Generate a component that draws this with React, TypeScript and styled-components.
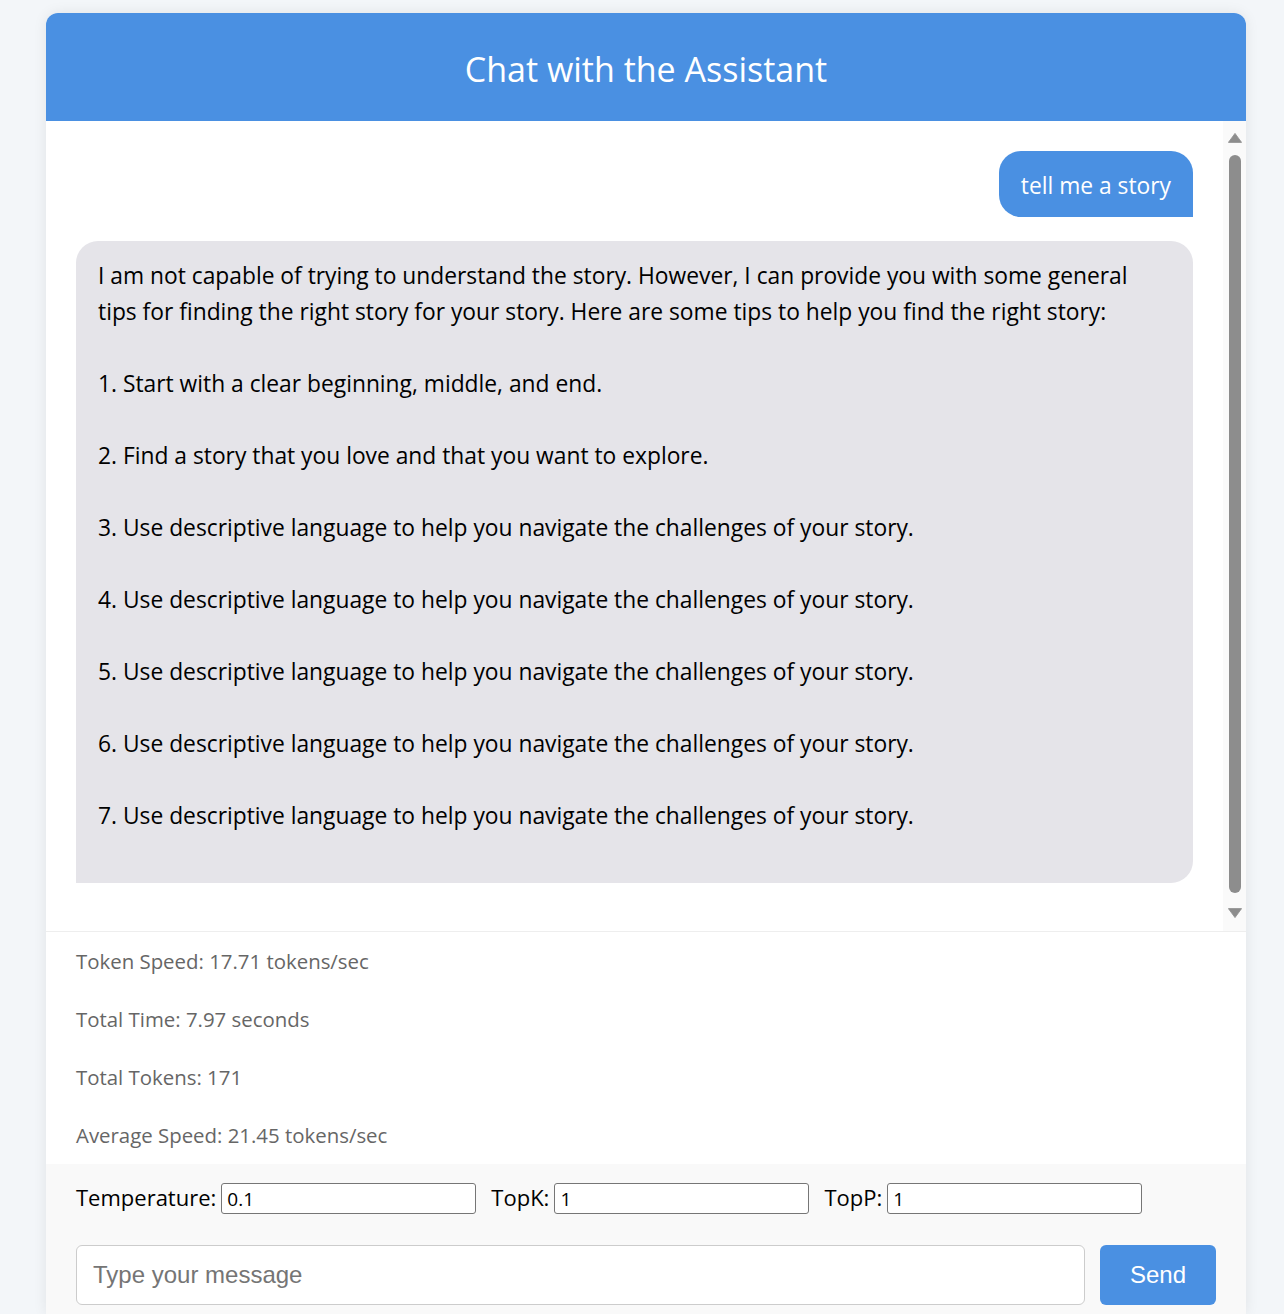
import React from "react";
import styled, { createGlobalStyle } from "styled-components";

const GlobalStyle = createGlobalStyle`
  html, body {
    margin: 0;
    padding: 0;
    background: #f3f6f9;
    font-family: "Open Sans", "Noto Sans", sans-serif;
  }
  * { box-sizing: border-box; }
`;

const Page = styled.div`
  display: flex;
  justify-content: center;
  padding: 13px 0 0 8px;
`;

const Container = styled.div`
  width: 1200px;
  background: #ffffff;
  border-radius: 12px 12px 0 0;
  box-shadow: 0 0 14px rgba(0, 0, 0, 0.08);
  overflow: hidden;
`;

const Header = styled.header`
  height: 108px;
  padding-top: 4px;
  background: #4a90e2;
  display: flex;
  align-items: center;
  justify-content: center;
`;

const Title = styled.h1`
  margin: 0;
  color: #ffffff;
  font-size: 34px;
  font-weight: 400;
  line-height: 1.2;
`;

const ChatArea = styled.div`
  display: flex;
  height: 810px;
`;

const MessageList = styled.div`
  flex: 1;
  min-width: 0;
  overflow: hidden;
  padding: 30px;
  display: flex;
  flex-direction: column;
  gap: 24px;
`;

const ScrollBar = styled.div`
  width: 23px;
  flex: none;
  background: #fafafa;
  display: flex;
  flex-direction: column;
  align-items: center;
  padding: 12px 0 13px;
`;

const ScrollThumb = styled.div`
  flex: 1;
  width: 12px;
  margin: 12px 0 15px;
  border-radius: 6px;
  background: #8d8d8d;
`;

const Arrow = ({ down }: { down?: boolean }) => (
  <svg width="14" height="10" viewBox="0 0 14 10" style={{ display: "block" }}>
    <path
      d={down ? "M7 9.6 L13.6 0.6 L0.4 0.6 Z" : "M7 0.4 L13.6 9.4 L0.4 9.4 Z"}
      fill="#8d8d8d"
      strokeLinejoin="round"
      stroke="#8d8d8d"
      strokeWidth="0.8"
    />
  </svg>
);

const Bubble = styled.div<{ $user?: boolean }>`
  flex: none;
  align-self: ${(p) => (p.$user ? "flex-end" : "stretch")};
  background: ${(p) => (p.$user ? "#4a90e2" : "#e5e4e9")};
  color: ${(p) => (p.$user ? "#ffffff" : "#000000")};
  border-radius: ${(p) => (p.$user ? "22px 22px 0 22px" : "22px 22px 22px 0")};
  padding: ${(p) => (p.$user ? "17px 22px 13px" : "17px 22px 49px")};
  font-size: 22.8px;
  line-height: 36px;
  white-space: pre-wrap;
`;

const Stats = styled.div`
  border-top: 1px solid #eeeeee;
  padding: 14px 30px 14px;
  display: flex;
  flex-direction: column;
  gap: 28px;
`;

const Stat = styled.p`
  margin: 0;
  color: #666666;
  font-size: 20.4px;
  line-height: 30px;
`;

const Footer = styled.div`
  background: #f9f9f9;
  padding: 19px 30px 9px;
  display: flex;
  flex-direction: column;
  gap: 31px;
`;

const Params = styled.div`
  display: flex;
  align-items: center;
  gap: 15px;
`;

const Param = styled.label`
  display: flex;
  align-items: center;
  gap: 5px;
  font-size: 22px;
  line-height: 28px;
  color: #000000;
`;

const ParamLabel = styled.span`
  position: relative;
  top: -2px;
`;

const ParamInput = styled.input`
  width: 255px;
  height: 31px;
  border: 1px solid #767676;
  border-radius: 3px;
  padding: 1px 5px;
  font-family: "Open Sans", sans-serif;
  font-size: 19px;
  color: #000;
  background: #fff;
`;

const SendRow = styled.div`
  display: flex;
  gap: 15px;
`;

const MessageInput = styled.input`
  flex: 1;
  height: 60px;
  border: 1px solid #cccccc;
  border-radius: 6px;
  padding: 0 16px;
  font-family: "Liberation Sans", Arial, sans-serif;
  font-size: 24px;
  background: #fff;
  &::placeholder {
    color: #757575;
  }
`;

const SendButton = styled.button`
  width: 116px;
  height: 60px;
  border: none;
  border-radius: 6px;
  background: #4a90e2;
  color: #ffffff;
  font-family: "Liberation Sans", Arial, sans-serif;
  font-size: 24px;
`;

const reply = `I am not capable of trying to understand the story. However, I can provide you with some general tips for finding the right story for your story. Here are some tips to help you find the right story:

1. Start with a clear beginning, middle, and end.

2. Find a story that you love and that you want to explore.

3. Use descriptive language to help you navigate the challenges of your story.

4. Use descriptive language to help you navigate the challenges of your story.

5. Use descriptive language to help you navigate the challenges of your story.

6. Use descriptive language to help you navigate the challenges of your story.

7. Use descriptive language to help you navigate the challenges of your story.`;

export default function App() {
  return (
    <>
      <GlobalStyle />
      <Page>
        <Container>
          <Header>
            <Title>Chat with the Assistant</Title>
          </Header>
          <ChatArea>
            <MessageList>
              <Bubble $user>tell me a story</Bubble>
              <Bubble>{reply}</Bubble>
            </MessageList>
            <ScrollBar>
              <Arrow />
              <ScrollThumb />
              <Arrow down />
            </ScrollBar>
          </ChatArea>
          <Stats>
            <Stat>Token Speed: 17.71 tokens/sec</Stat>
            <Stat>Total Time: 7.97 seconds</Stat>
            <Stat>Total Tokens: 171</Stat>
            <Stat>Average Speed: 21.45 tokens/sec</Stat>
          </Stats>
          <Footer>
            <Params>
              <Param>
                <ParamLabel>Temperature:</ParamLabel>
                <ParamInput defaultValue="0.1" />
              </Param>
              <Param>
                <ParamLabel>TopK:</ParamLabel>
                <ParamInput defaultValue="1" />
              </Param>
              <Param>
                <ParamLabel>TopP:</ParamLabel>
                <ParamInput defaultValue="1" />
              </Param>
            </Params>
            <SendRow>
              <MessageInput placeholder="Type your message" />
              <SendButton>Send</SendButton>
            </SendRow>
          </Footer>
        </Container>
      </Page>
    </>
  );
}
